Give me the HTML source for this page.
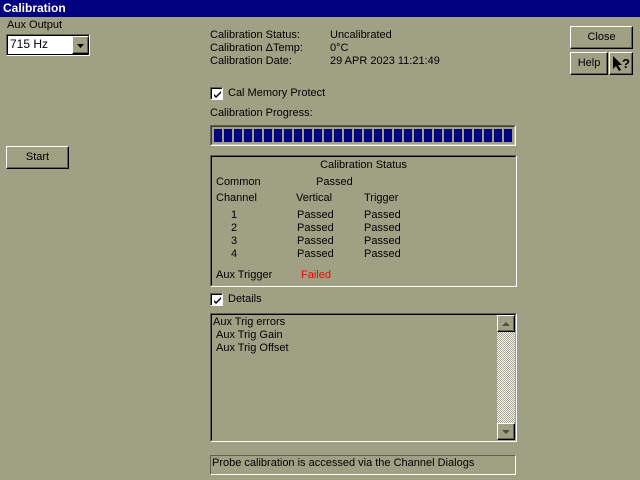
<!DOCTYPE html><html><head><style>
*{margin:0;padding:0;box-sizing:border-box}
body{width:640px;height:480px;background:#a0a084;font-family:"Liberation Sans",sans-serif;font-size:11px;color:#000;position:relative;overflow:hidden}
div{position:absolute;white-space:nowrap;line-height:13px}
.btn{border:1px solid;border-color:#fff #000 #000 #fff;box-shadow:inset -1px -1px 0 #606050;text-align:center}
.sunk{border:1px solid;border-color:#606050 #fff #fff #606050}
.sunk2{border:1px solid;border-color:#000 #d0d0c0 #d0d0c0 #000}
.cb{width:13px;height:13px;background:#fff;border:1px solid;border-color:#606050 #fff #fff #606050;box-shadow:inset 1px 1px 0 #000}
.cb svg{position:absolute;left:2px;top:2px}
</style></head><body>
<div style="left:0;top:0;width:640px;height:17px;background:#000080;color:#fff;font-weight:bold;font-size:12px;line-height:17px;padding-left:3px">Calibration</div>
<div style="left:7px;top:19px">Aux Output</div>
<div style="left:6px;top:34px;width:84px;height:22px;background:#fff;border:1px solid;border-color:#606050 #fff #fff #606050"><div style="left:0;top:0;width:82px;height:20px;border:1px solid #000;border-right:none"></div><div style="left:3px;top:3px;font-size:12px">715 Hz</div>
<div class="btn" style="left:65px;top:1px;width:17px;height:18px;background:#a0a084"><svg width="15" height="16" style="position:absolute;left:0;top:0"><path d="M4 7h7l-3.5 4z" fill="#000"/></svg></div></div>
<div style="left:210px;top:29px">Calibration Status:</div><div style="left:330px;top:29px">Uncalibrated</div>
<div style="left:210px;top:42px">Calibration ΔTemp:</div><div style="left:330px;top:42px">0°C</div>
<div style="left:210px;top:55px">Calibration Date:</div><div style="left:330px;top:55px">29 APR 2023 11:21:49</div>
<div class="btn" style="left:570px;top:26px;width:63px;height:23px;line-height:21px">Close</div>
<div class="btn" style="left:570px;top:52px;width:38px;height:23px;line-height:21px">Help</div>
<div class="btn" style="left:609px;top:52px;width:24px;height:23px"><svg width="22" height="21" style="position:absolute;left:0;top:0"><path d="M3 3v13l3-3 3 5 2-1-3-5h4z" fill="#000"/><text x="12" y="15" font-family="Liberation Sans" font-weight="bold" font-size="13">?</text></svg></div>
<div class="btn" style="left:6px;top:146px;width:63px;height:23px;line-height:21px">Start</div>
<div class="cb" style="left:210px;top:87px"><svg width="9" height="9"><path d="M1 4l2 2 5-5v2l-5 5-2-2z" fill="#000"/></svg></div><div style="left:228px;top:87px">Cal Memory Protect</div>
<div style="left:210px;top:107px">Calibration Progress:</div>
<div class="sunk" style="left:210px;top:125px;width:306px;height:21px"><div style="left:0;top:0;width:304px;height:19px;border:1px solid;border-color:#404030 #c0c0b0 #c0c0b0 #404030;background:repeating-linear-gradient(90deg,#000080 0 8px,transparent 8px 10px) 2px 2px/298px 13px no-repeat"></div></div>
<div class="sunk" style="left:210px;top:155px;width:307px;height:132px"><div style="left:0;top:0;width:305px;height:130px;border:1px solid;border-color:#000 transparent transparent #000"></div></div>
<div style="left:210px;top:159px;width:307px;text-align:center">Calibration Status</div>
<div style="left:216px;top:176px">Common</div><div style="left:316px;top:176px">Passed</div>
<div style="left:216px;top:192px">Channel</div><div style="left:296px;top:192px">Vertical</div><div style="left:364px;top:192px">Trigger</div>
<div style="left:231px;top:209px">1</div><div style="left:297px;top:209px">Passed</div><div style="left:364px;top:209px">Passed</div>
<div style="left:231px;top:222px">2</div><div style="left:297px;top:222px">Passed</div><div style="left:364px;top:222px">Passed</div>
<div style="left:231px;top:235px">3</div><div style="left:297px;top:235px">Passed</div><div style="left:364px;top:235px">Passed</div>
<div style="left:231px;top:248px">4</div><div style="left:297px;top:248px">Passed</div><div style="left:364px;top:248px">Passed</div>
<div style="left:216px;top:269px">Aux Trigger</div><div style="left:301px;top:269px;color:#f00">Failed</div>
<div class="cb" style="left:210px;top:293px"><svg width="9" height="9"><path d="M1 4l2 2 5-5v2l-5 5-2-2z" fill="#000"/></svg></div><div style="left:228px;top:293px">Details</div>
<div class="sunk" style="left:210px;top:313px;width:307px;height:129px"><div style="left:0;top:0;width:305px;height:127px;border:1px solid;border-color:#000 transparent transparent #000"></div></div>
<div style="left:213px;top:316px">Aux Trig errors</div>
<div style="left:216px;top:329px">Aux Trig Gain</div>
<div style="left:216px;top:342px">Aux Trig Offset</div>
<div style="left:497px;top:315px;width:18px;height:125px;background:repeating-conic-gradient(#fff 0 25%,#a0a084 0 50%) 0 0/2px 2px"></div>
<div class="btn" style="left:497px;top:315px;width:18px;height:17px;background:#a0a084"><svg width="16" height="15" style="position:absolute;left:0;top:0"><path d="M4 10h8l-4-4z" fill="#505040"/></svg></div>
<div class="btn" style="left:497px;top:423px;width:18px;height:17px;background:#a0a084"><svg width="16" height="15" style="position:absolute;left:0;top:0"><path d="M4 6h8l-4 4z" fill="#505040"/></svg></div>
<div class="sunk" style="left:210px;top:455px;width:306px;height:20px"></div>
<div style="left:212px;top:457px">Probe calibration is accessed via the Channel Dialogs</div>
</body></html>
